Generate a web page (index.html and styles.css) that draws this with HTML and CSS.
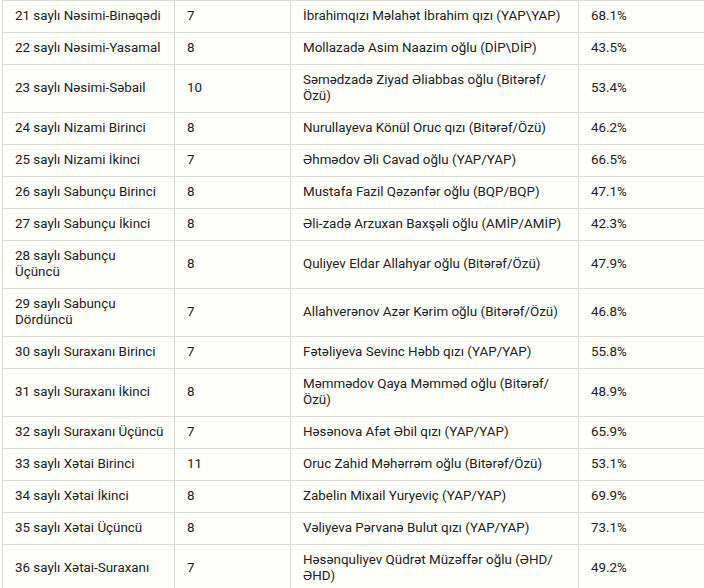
FILE: index.html
```html
<!DOCTYPE html>
<html lang="az">
<head>
<meta charset="utf-8">
<link rel="stylesheet" href="styles.css">
<title>Seçki nəticələri</title>
</head>
<body>
<div class="wrap">
<table class="results">
<colgroup><col class="c1"><col class="c2"><col class="c3"><col class="c4"></colgroup>
<tbody>
<tr><td>21 saylı Nəsimi-Binəqədi</td><td>7</td><td>İbrahimqızı Məlahət İbrahim qızı (YAP\YAP)</td><td>68.1%</td></tr>
<tr><td>22 saylı Nəsimi-Yasamal</td><td>8</td><td>Mollazadə Asim Naazim oğlu (DİP\DİP)</td><td>43.5%</td></tr>
<tr class="tall"><td>23 saylı Nəsimi-Səbail</td><td>10</td><td>Səmədzadə Ziyad Əliabbas oğlu (Bitərəf/ Özü)</td><td>53.4%</td></tr>
<tr><td>24 saylı Nizami Birinci</td><td>8</td><td>Nurullayeva Könül Oruc qızı (Bitərəf/Özü)</td><td>46.2%</td></tr>
<tr><td>25 saylı Nizami İkinci</td><td>7</td><td>Əhmədov Əli Cavad oğlu (YAP/YAP)</td><td>66.5%</td></tr>
<tr><td>26 saylı Sabunçu Birinci</td><td>8</td><td>Mustafa Fazil Qəzənfər oğlu (BQP/BQP)</td><td>47.1%</td></tr>
<tr><td>27 saylı Sabunçu İkinci</td><td>8</td><td>Əli-zadə Arzuxan Baxşəli oğlu (AMİP/AMİP)</td><td>42.3%</td></tr>
<tr class="tall"><td>28 saylı Sabunçu<br>Üçüncü</td><td>8</td><td>Quliyev Eldar Allahyar oğlu (Bitərəf/Özü)</td><td>47.9%</td></tr>
<tr class="tall"><td>29 saylı Sabunçu Dördüncü</td><td>7</td><td>Allahverənov Azər Kərim oğlu (Bitərəf/Özü)</td><td>46.8%</td></tr>
<tr><td>30 saylı Suraxanı Birinci</td><td>7</td><td>Fətəliyeva Sevinc Həbb qızı (YAP/YAP)</td><td>55.8%</td></tr>
<tr class="tall"><td>31 saylı Suraxanı İkinci</td><td>8</td><td>Məmmədov Qaya Məmməd oğlu (Bitərəf/ Özü)</td><td>48.9%</td></tr>
<tr><td>32 saylı Suraxanı Üçüncü</td><td>7</td><td>Həsənova Afət Əbil qızı (YAP/YAP)</td><td>65.9%</td></tr>
<tr><td>33 saylı Xətai Birinci</td><td>11</td><td>Oruc Zahid Məhərrəm oğlu (Bitərəf/Özü)</td><td>53.1%</td></tr>
<tr><td>34 saylı Xətai İkinci</td><td>8</td><td>Zabelin Mixail Yuryeviç (YAP/YAP)</td><td>69.9%</td></tr>
<tr><td>35 saylı Xətai Üçüncü</td><td>8</td><td>Vəliyeva Pərvanə Bulut qızı (YAP/YAP)</td><td>73.1%</td></tr>
<tr class="tall"><td>36 saylı Xətai-Suraxanı</td><td>7</td><td>Həsənquliyev Qüdrət Müzəffər oğlu (ƏHD/ ƏHD)</td><td>49.2%</td></tr>
</tbody>
</table>
</div>
</body>
</html>
```
FILE: styles.css
```css
html, body {
  margin: 0;
  padding: 0;
  background: #fefefa;
}
.wrap {
  width: 704px;
  height: 588px;
  overflow: hidden;
}
.results {
  border-collapse: collapse;
  table-layout: fixed;
  width: 760px;
  margin: 0 0 0 2px;
  font-family: Roboto, "Liberation Sans", Arial, sans-serif;
  font-size: 13.4px;
  line-height: 16px;
  color: #222;
}
.c1 { width: 172px; }
.c2 { width: 116px; }
.c3 { width: 288px; }
.c4 { width: 184px; }
.results td {
  border: 1px solid #dcdcdc;
  padding: 7px 12px 8px 12px;
  height: 16px;
  vertical-align: middle;
  text-align: left;
  word-wrap: break-word;
}
.results td:first-child {
  padding-right: 9px;
}
.results tr.tall td {
  height: 32px;
}
```
